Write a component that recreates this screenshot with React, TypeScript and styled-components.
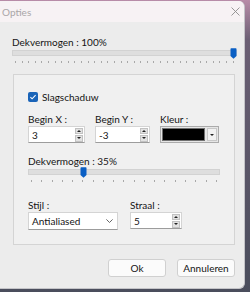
import styled, { createGlobalStyle } from 'styled-components'

const GlobalStyle = createGlobalStyle`
    html, body {
        margin: 0;
        padding: 0;
        width: 250px;
        height: 292px;
        overflow: hidden;
        background: #3d3f4c;
        font-family: Lato, "Open Sans", sans-serif;
    }
`

const Desktop = styled.div`
    width: 250px;
    height: 292px;
    background: linear-gradient(180deg, #b88ca8 0px, #6b5f74 40px, #4a4d5c 100%);
    display: flex;
    align-items: flex-start;
`

const Window = styled.div`
    width: 245px;
    height: 288px;
    margin-top: 1px;
    background: #ececec;
    border-right: 1px solid #c4c4c8;
    border-bottom: 1px solid #c4c4c8;
    border-radius: 0 6px 6px 0;
    display: flex;
    flex-direction: column;
    box-sizing: border-box;
    overflow: hidden;
`

const TitleBar = styled.div`
    height: 21px;
    flex-shrink: 0;
    background: #f7f2f4;
    display: flex;
    align-items: center;
    justify-content: space-between;
    padding: 0 4px 0 2px;
    font-size: 10px;
    color: #aaa6a8;
`

const CloseIcon = styled.svg`
    width: 9px;
    height: 9px;
`

const Body = styled.div`
    flex: 1;
    padding: 14px 4px 0 12px;
    display: flex;
    flex-direction: column;
`

const Label = styled.div`
    font-size: 10px;
    color: #141414;
    line-height: 13px;
    white-space: nowrap;
`

const SliderWrap = styled.div<{ $width: number }>`
    position: relative;
    width: ${p => p.$width}px;
    height: 16px;
    margin-top: -1px;
`

const Track = styled.div`
    position: absolute;
    left: 0;
    right: 0;
    top: 2px;
    height: 4px;
    background: #dedede;
    border: 1px solid #d2d2d2;
`

const Ticks = styled.div`
    position: absolute;
    left: 3px;
    right: 3px;
    top: 13px;
    height: 2px;
    display: flex;
    justify-content: space-between;
`

const Tick = styled.span`
    width: 1px;
    height: 2px;
    background: #a8a8a8;
`

const Thumb = styled.svg`
    position: absolute;
    top: 0;
    width: 7px;
    height: 11px;
`

const GroupBox = styled.div`
    margin: 10px 0 0 1px;
    width: 222px;
    height: 171px;
    border: 1px solid #d4d4d4;
    box-sizing: border-box;
    background: #f0f0f0;
    padding: 15px 10px 0 14px;
    display: flex;
    flex-direction: column;
`

const CheckRow = styled.label`
    display: flex;
    align-items: center;
    gap: 4px;
    height: 14px;
    font-size: 10px;
    color: #141414;
`

const CheckBox = styled.span`
    width: 10px;
    height: 10px;
    border-radius: 2px;
    background: #1a64b8;
    display: flex;
    align-items: center;
    justify-content: center;
`

const FieldRow = styled.div<{ $gap: number; $top: number }>`
    display: flex;
    gap: ${p => p.$gap}px;
    margin-top: ${p => p.$top}px;
`

const Field = styled.div`
    display: flex;
    flex-direction: column;
`

const Box = styled.div<{ $width: number; $height?: number }>`
    width: ${p => p.$width}px;
    height: ${p => p.$height ?? 17}px;
    background: #ffffff;
    border: 1px solid #d4d4d4;
    border-bottom-color: #9c9c9c;
    box-sizing: border-box;
    display: flex;
    align-items: center;
    font-size: 10px;
    color: #141414;
    padding-left: 3px;
`

const BoxText = styled.span`
    flex: 1;
`

const Spin = styled.div`
    width: 8px;
    height: 14px;
    display: flex;
    flex-direction: column;
    gap: 1px;
    margin-right: 1px;
`

const SpinBtn = styled.div`
    flex: 1;
    background: #e2e2e2;
    border: 1px solid #c2c2c2;
    display: flex;
    align-items: center;
    justify-content: center;
`

const Arrow = styled.span<{ $up?: boolean }>`
    width: 0;
    height: 0;
    border-left: 2px solid transparent;
    border-right: 2px solid transparent;
    ${p => p.$up ? 'border-bottom: 2px solid #222;' : 'border-top: 2px solid #222;'}
`

const ColorBox = styled.div`
    width: 59px;
    height: 17px;
    background: #e6e6e6;
    border: 1px solid #ababab;
    box-sizing: border-box;
    display: flex;
    align-items: center;
    padding: 1px;
    gap: 2px;
`

const Swatch = styled.div`
    flex: 1;
    height: 100%;
    background: #000000;
    border: 1px solid #707070;
    box-sizing: border-box;
`

const DropBtn = styled.div`
    width: 10px;
    height: 100%;
    background: #f2f2f2;
    border: 1px solid #c8c8c8;
    box-sizing: border-box;
    display: flex;
    align-items: center;
    justify-content: center;
`

const Chevron = styled.svg`
    width: 7px;
    height: 4px;
    margin-right: 4px;
`

const Footer = styled.div`
    display: flex;
    justify-content: flex-end;
    gap: 11px;
    padding: 14px 5px 0 0;
`

const Button = styled.button`
    width: 58px;
    height: 18px;
    background: #fbfbfb;
    border: 1px solid #d0d0d0;
    border-radius: 3px;
    font-family: inherit;
    font-size: 10px;
    color: #141414;
    padding: 0;
`

function Slider({ width, value, ticks }: { width: number; value: number; ticks: number }) {
    return (
        <SliderWrap $width={width}>
            <Track />
            <Ticks>
                {Array.from({ length: ticks }).map((_, i) => <Tick key={i} />)}
            </Ticks>
            <Thumb viewBox="0 0 7 11" style={{ left: `${(width - 7) * value / 100}px` }}>
                <path d="M0.5 1 Q0.5 0.3 1.2 0.3 H5.8 Q6.5 0.3 6.5 1 V8 L3.5 10.8 L0.5 8 Z" fill="#0a5fc4" />
            </Thumb>
        </SliderWrap>
    )
}

function SpinBox({ width, value }: { width: number; value: string }) {
    return (
        <Box $width={width}>
            <BoxText>{value}</BoxText>
            <Spin>
                <SpinBtn><Arrow $up /></SpinBtn>
                <SpinBtn><Arrow /></SpinBtn>
            </Spin>
        </Box>
    )
}

export default function App() {
    return (
        <>
            <GlobalStyle />
            <Desktop>
                <Window>
                    <TitleBar>
                        <span>Opties</span>
                        <CloseIcon viewBox="0 0 9 9">
                            <path d="M0.5 0.5 L8.5 8.5 M8.5 0.5 L0.5 8.5" stroke="#8c8c8c" strokeWidth="0.9" />
                        </CloseIcon>
                    </TitleBar>
                    <Body>
                        <Label>Dekvermogen : 100%</Label>
                        <Slider width={225} value={100} ticks={34} />
                        <GroupBox>
                            <CheckRow>
                                <CheckBox>
                                    <svg width="8" height="8" viewBox="0 0 8 8">
                                        <path d="M1.4 4.1 L3.1 5.8 L6.6 2.2" stroke="#fff" strokeWidth="1.1" fill="none" />
                                    </svg>
                                </CheckBox>
                                Slagschaduw
                            </CheckRow>
                            <FieldRow $gap={10} $top={9}>
                                <Field>
                                    <Label>Begin X :</Label>
                                    <SpinBox width={57} value="3" />
                                </Field>
                                <Field>
                                    <Label>Begin Y :</Label>
                                    <SpinBox width={55} value="-3" />
                                </Field>
                                <Field>
                                    <Label>Kleur :</Label>
                                    <ColorBox>
                                        <Swatch />
                                        <DropBtn><Arrow /></DropBtn>
                                    </ColorBox>
                                </Field>
                            </FieldRow>
                            <FieldRow $gap={0} $top={12}>
                                <Field>
                                    <Label>Dekvermogen : 35%</Label>
                                    <Slider width={192} value={28} ticks={19} />
                                </Field>
                            </FieldRow>
                            <FieldRow $gap={12} $top={16}>
                                <Field>
                                    <Label>Stijl :</Label>
                                    <Box $width={90} $height={18}>
                                        <BoxText>Antialiased</BoxText>
                                        <Chevron viewBox="0 0 7 4">
                                            <path d="M0.4 0.4 L3.5 3.5 L6.6 0.4" stroke="#555" strokeWidth="0.9" fill="none" />
                                        </Chevron>
                                    </Box>
                                </Field>
                                <Field>
                                    <Label>Straal :</Label>
                                    <SpinBox width={52} value="5" />
                                </Field>
                            </FieldRow>
                        </GroupBox>
                        <Footer>
                            <Button>Ok</Button>
                            <Button>Annuleren</Button>
                        </Footer>
                    </Body>
                </Window>
            </Desktop>
        </>
    )
}
